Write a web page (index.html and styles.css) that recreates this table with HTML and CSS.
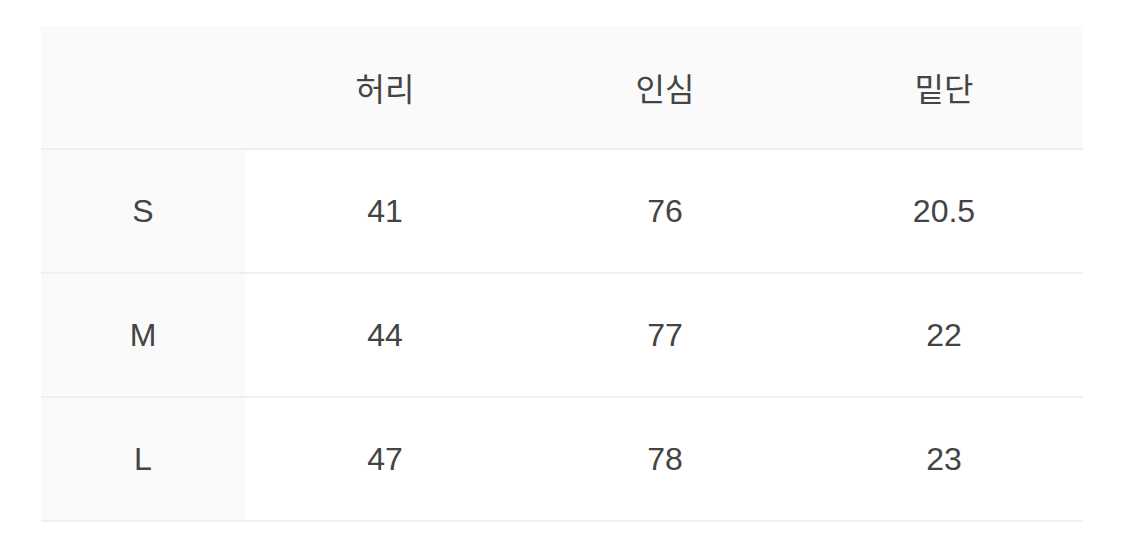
FILE: index.html
```html
<!DOCTYPE html>
<html lang="ko">
<head>
<meta charset="utf-8">
<link rel="stylesheet" href="styles.css">
</head>
<body>
<div class="wrap">
<table class="size">
  <colgroup>
    <col class="c0"><col class="c1"><col class="c2"><col class="c3">
  </colgroup>
  <thead>
    <tr><th></th><th>허리</th><th>인심</th><th>밑단</th></tr>
  </thead>
  <tbody>
    <tr><th>S</th><td>41</td><td>76</td><td>20.5</td></tr>
    <tr><th>M</th><td>44</td><td>77</td><td>22</td></tr>
    <tr><th>L</th><td>47</td><td>78</td><td>23</td></tr>
  </tbody>
</table>
</div>
</body>
</html>
```

FILE: styles.css
```css
html, body {
  margin: 0;
  padding: 0;
  background: #ffffff;
}
.wrap {
  padding: 26px 42px 0 41px;
}
.size {
  width: 1042px;
  border-collapse: collapse;
  table-layout: fixed;
  font-family: "Liberation Sans", "Noto Sans CJK KR", sans-serif;
  font-size: 32px;
  color: #444444;
}
.c0 { width: 204px; }
.c1 { width: 280px; }
.c2 { width: 280px; }
.c3 { width: 278px; }
.size th, .size td {
  height: 122px;
  padding: 0;
  text-align: center;
  vertical-align: middle;
  font-weight: normal;
  border-bottom: 2px solid #efefef;
}
.size thead th {
  background: #fafafa;
}
.size tbody th {
  background: #fafafa;
}
.size tbody td {
  background: #ffffff;
}
```
